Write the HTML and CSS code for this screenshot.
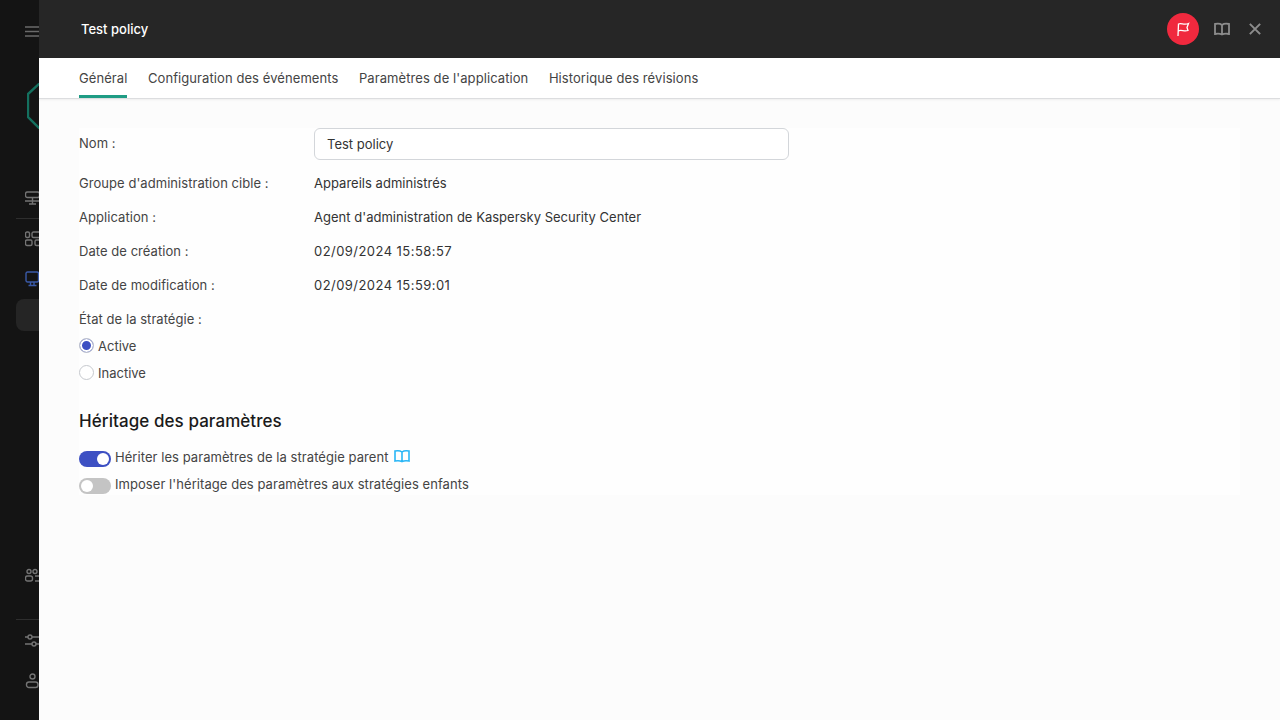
FILE: index.html
```html
<!DOCTYPE html>
<html lang="fr">

<head>
    <meta charset="UTF-8">
    <title>Test policy</title>
    <link rel="stylesheet" href="styles.css">
</head>

<body>
    <div class="app">
        <div class="sb">
            <svg class="ic menu" viewBox="0 0 16 16"><path d="M0 4h16M0 8.500h16M0 13h16" /></svg>
            <svg class="logo" viewBox="0 0 40 46"><path d="M12 1 1 11v23l11 11h28V1z" /></svg>
            <svg class="ic net" viewBox="0 0 16 16"><rect x="0.500" y="2" width="14" height="5.500" rx="2" /><path d="M7.500 7.500v6.500M0 11h15M4 14h7" /></svg>
            <div class="sb-line"></div>
            <svg class="ic grid" viewBox="0 0 16 16"><rect x="0.500" y="1" width="4" height="5.500" rx="1.500" /><rect x="7" y="1" width="9" height="5.500" rx="1.500" /><rect x="0.500" y="9" width="6.500" height="5.500" rx="1.500" /><rect x="10" y="9" width="6" height="5.500" rx="1.500" /></svg>
            <svg class="ic mon" viewBox="0 0 16 16"><rect x="1" y="1" width="12.500" height="10" rx="1.500" /><path d="M5.500 11v3M9 11v3M3.500 14.500h8" /></svg>
            <div class="sb-sel"></div>
            <svg class="ic users" viewBox="0 0 16 16"><circle cx="4" cy="3.500" r="2" /><circle cx="10" cy="3.500" r="2" /><rect x="0.500" y="8" width="7" height="5" rx="2" /><path d="M10 8h3.500a2 2 0 0 1 2 2v1a2 2 0 0 1-2 2H10" /></svg>
            <div class="sb-line low"></div>
            <svg class="ic sliders" viewBox="0 0 16 16"><path d="M0 4h3M7 4h9M0 11h7M11 11h5" /><circle cx="5" cy="4" r="2" /><circle cx="9" cy="11" r="2" /></svg>
            <svg class="ic user" viewBox="0 0 16 16"><circle cx="7.500" cy="3.500" r="2.500" /><rect x="1.500" y="9" width="11.500" height="5.500" rx="2.500" /></svg>
        </div>

        <div class="pn">
            <div class="hd">
                <span class="hd-t">Test policy</span>
                <div class="hd-a">
                    <div class="flag">
                        <svg viewBox="0 0 16 16"><path d="M3 15 3.500 3C6 1.500 9 4.500 13.500 2.500L12 6.500 13 9.500C9 11 6 8 3.200 10" /></svg>
                    </div>
                    <svg class="hd-book" viewBox="0 0 16 16"><path d="M8 4C6.500 2.800 3.500 2.500 1 3v10c2.500-.5 5.500-.2 7 .5 1.500-.7 4.500-1 7-.5V3c-2.500-.5-5.500-.2-7 1zM8 4v9.500" /></svg>
                    <svg class="hd-x" viewBox="0 0 14 14"><path d="M1 1l12 12M13 1 1 13" /></svg>
                </div>
            </div>

            <div class="tabs">
                <div class="tab on">Général</div>
                <div class="tab">Configuration des événements</div>
                <div class="tab">Paramètres de l'application</div>
                <div class="tab">Historique des révisions</div>
            </div>

            <div class="bd">
                <div class="frm">
                    <div class="row first">
                        <div class="lbl">Nom :</div>
                        <div class="inp">Test policy</div>
                    </div>
                    <div class="row">
                        <div class="lbl">Groupe d'administration cible :</div>
                        <div class="val">Appareils administrés</div>
                    </div>
                    <div class="row">
                        <div class="lbl">Application :</div>
                        <div class="val">Agent d'administration de Kaspersky Security Center</div>
                    </div>
                    <div class="row">
                        <div class="lbl">Date de création :</div>
                        <div class="val num">02/09/2024 15:58:57</div>
                    </div>
                    <div class="row">
                        <div class="lbl">Date de modification :</div>
                        <div class="val num">02/09/2024 15:59:01</div>
                    </div>
                    <div class="row state">
                        <div class="lbl">État de la stratégie :</div>
                    </div>
                    <div class="opt"><span class="rd on"></span>Active</div>
                    <div class="opt"><span class="rd"></span>Inactive</div>

                    <h2>Héritage des paramètres</h2>

                    <div class="sw-r">
                        <span class="sw on"></span>
                        <span class="sw-t">Hériter les paramètres de la stratégie parent</span>
                        <svg class="bk" viewBox="0 0 16 16"><path d="M8 4C6.500 2.800 3.500 2.500 1 3v10c2.500-.5 5.500-.2 7 .5 1.500-.7 4.500-1 7-.5V3c-2.500-.5-5.500-.2-7 1zM8 4v9.500" /></svg>
                    </div>
                    <div class="sw-r">
                        <span class="sw"></span>
                        <span class="sw-t">Imposer l'héritage des paramètres aux stratégies enfants</span>
                    </div>
                </div>
            </div>
        </div>
    </div>
</body>

</html>
```

FILE: styles.css
```css
html,
body {
    height: 100%;
}

body {
    margin: 0;
    padding: 0;
    overflow: hidden;
    font-family: Inter, "Noto Sans", Arial, sans-serif;
    font-size: 13px;
    color: #333;
    background: #141414;
}

.app {
    display: flex;
    height: 720px;
}

/* what is left of the nav behind the panel */
.sb {
    width: 39px;
    flex: none;
    overflow: hidden;
    display: flex;
    flex-direction: column;
    align-items: flex-start;
    background: #141414;
}

.sb svg {
    display: block;
    flex: none;
}

.ic {
    width: 16px;
    height: 16px;
    margin-left: 25px;
    fill: none;
    stroke: #747474;
    stroke-width: 1.4;
}

.menu {
    margin-top: 23px;
    stroke: #6a6a6a;
    stroke-width: 1.6;
}

.logo {
    width: 40px;
    height: 46px;
    margin: 44px 0 0 27px;
    fill: none;
    stroke: #14705f;
    stroke-width: 2.400;
}

.net {
    margin-top: 61px;
}

.sb-line {
    width: 23px;
    height: 1px;
    flex: none;
    margin: 12px 0 0 16px;
    background: #2e2e2e;
}

.sb-line.low {
    margin-top: 35px;
}

.grid {
    margin-top: 12px;
}

.mon {
    margin-top: 24px;
    stroke: #3a5aa8;
}

.sb-sel {
    width: 40px;
    height: 32px;
    flex: none;
    margin: 12px 0 0 16px;
    border-radius: 8px;
    background: #252525;
}

.users {
    margin-top: 237px;
}

.sliders {
    margin-top: 13px;
}

.user {
    margin-top: 24px;
}

.pn {
    flex: 1;
    display: flex;
    flex-direction: column;
    background: #fcfcfc;
}

.hd {
    height: 58px;
    flex: none;
    display: flex;
    align-items: center;
    justify-content: space-between;
    padding: 0 19px 0 42px;
    background: #262626;
}

.hd-t {
    font-size: 13px;
    font-weight: 500;
    color: #fff;
}

.hd-a {
    display: flex;
    align-items: center;
}

.flag {
    width: 32px;
    height: 32px;
    display: flex;
    align-items: center;
    justify-content: center;
    border-radius: 50%;
    background: #f0293e;
}

.flag svg {
    width: 16px;
    height: 16px;
    fill: none;
    stroke: #fff;
    stroke-width: 1.300;
}

.hd-book {
    width: 16px;
    height: 16px;
    margin-left: 15px;
    fill: none;
    stroke: #8c8c8c;
    stroke-width: 1.800;
}

.hd-x {
    width: 12px;
    height: 12px;
    margin-left: 19px;
    fill: none;
    stroke: #8c8c8c;
    stroke-width: 2.300;
}

.tabs {
    height: 40px;
    flex: none;
    display: flex;
    gap: 20.500px;
    padding-left: 40px;
    background: #fff;
    border-bottom: 1px solid #dcdddf;
    box-shadow: 0 1px 2px rgba(0, 0, 0, 0.06);
}

.tab {
    height: 40px;
    line-height: 40px;
    box-sizing: border-box;
    white-space: nowrap;
    letter-spacing: 0.08px;
    color: #444;
}

.tab.on {
    border-bottom: 3px solid #1f9c84;
}

.bd {
    flex: 1;
    padding: 29px 40px 0;
}

.frm {
    height: 367px;
    background: #fefefe;
}

.row {
    display: grid;
    grid-template-columns: 235px 1fr;
    align-items: center;
    height: 34px;
}

.row.first {
    height: 32px;
    margin-bottom: 6px;
}

.row.first .lbl {
    padding-bottom: 2px;
}

.row.state {
    height: 27px;
    margin-top: 3px;
}

.lbl {
    letter-spacing: 0.05px;
    color: #444;
}

.val {
    letter-spacing: 0.02px;
}

.val.num {
    letter-spacing: 0.45px;
}

.inp {
    width: 475px;
    height: 32px;
    line-height: 30px;
    box-sizing: border-box;
    padding-left: 12px;
    border: 1px solid #d3d6da;
    border-radius: 6px;
    background: #fff;
}

.opt {
    display: flex;
    align-items: center;
    gap: 4px;
    height: 27px;
    color: #444;
}

.rd {
    width: 15px;
    height: 15px;
    box-sizing: border-box;
    border: 1px solid #c6c9ce;
    border-radius: 50%;
    background: #fff;
}

.rd.on {
    background: #3d50c3;
    box-shadow: inset 0 0 0 2px #fff;
}

h2 {
    margin: 24px 0 13px;
    font-size: 17px;
    line-height: 22px;
    font-weight: 500;
    letter-spacing: 0.07px;
    color: #1a1a1a;
}

.sw-r {
    display: flex;
    align-items: center;
    height: 27px;
    letter-spacing: 0.06px;
    color: #444;
}

.sw-t {
    margin-top: -3px;
}

.sw {
    position: relative;
    width: 32px;
    height: 16px;
    flex: none;
    margin-right: 4px;
    border-radius: 8px;
    background: #c4c4c4;
}

.sw::after {
    content: "";
    position: absolute;
    top: 2px;
    left: 2px;
    width: 12px;
    height: 12px;
    border-radius: 50%;
    background: #fff;
}

.sw.on {
    background: #3d50c3;
}

.sw.on::after {
    left: 18px;
}

.bk {
    width: 16px;
    height: 16px;
    margin: -5px 0 0 5px;
    fill: none;
    stroke: #29b6f6;
    stroke-width: 1.600;
}
```
